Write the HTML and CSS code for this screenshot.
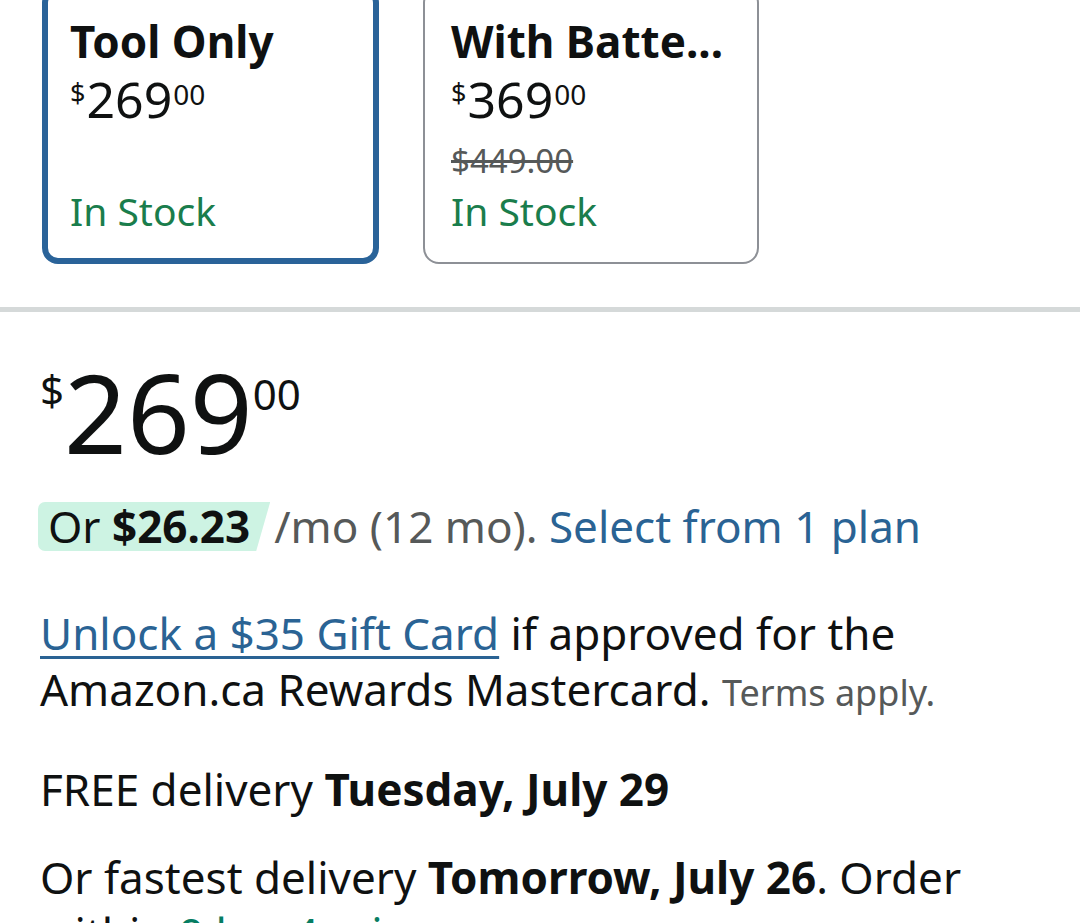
FILE: index.html
```html
<!DOCTYPE html>
<html lang="en">
<head>
<meta charset="utf-8">
<title>Product buy box</title>
<link rel="stylesheet" href="styles.css">
</head>
<body>
<div class="swatches">
  <div class="swatch selected">
    <div class="sw-title">Tool Only</div>
    <div class="sw-price"><span class="sw-sym">$</span><span class="sw-whole">269</span><span class="sw-frac">00</span></div>
    <div class="sw-stock">In Stock</div>
  </div>
  <div class="swatch">
    <div class="sw-title">With Batte...</div>
    <div class="sw-price"><span class="sw-sym">$</span><span class="sw-whole">369</span><span class="sw-frac">00</span></div>
    <div class="sw-list">$449.00</div>
    <div class="sw-stock">In Stock</div>
  </div>
</div>
<div class="divider"></div>
<div class="buybox">
  <div class="price"><span class="p-sym">$</span><span class="p-whole">269</span><span class="p-frac">00</span></div>
  <div class="emi"><span class="pill">Or <b>$26.23</b></span><span class="muted">/mo (12 mo).</span> <a class="link" href="#">Select from 1 plan</a></div>
  <p class="promo"><a class="link underline" href="#">Unlock a $35 Gift Card</a> if approved for the Amazon.ca Rewards Mastercard. <span class="terms">Terms apply.</span></p>
  <p class="delivery free">FREE delivery <b>Tuesday, July 29</b></p>
  <p class="delivery fast">Or fastest delivery <b>Tomorrow, July 26</b>. Order within <span class="countdown">9 hrs 4 mins</span></p>
</div>
</body>
</html>
```

FILE: styles.css
```css
html, body {
  margin: 0;
  padding: 0;
  background: #ffffff;
}
body {
  font-family: "Noto Sans", "Open Sans", sans-serif;
  color: #0f1111;
  width: 1080px;
  height: 923px;
  overflow: hidden;
}
.swatches {
  display: flex;
  gap: 44px;
  padding-left: 42px;
  margin-top: -13px;
}
.swatch {
  box-sizing: border-box;
  width: 336px;
  display: flex;
  flex-direction: column;
  border: 2px solid #8d9096;
  border-radius: 16px;
  padding: 26px 26px 27px 26px;
}
.swatch.selected {
  width: 337px;
  border: 6px solid #2a6399;
  padding: 22px 22px 23px 22px;
}
.sw-title {
  font-weight: 700;
  font-size: 44px;
  line-height: 52px;
  white-space: nowrap;
}
.sw-price {
  display: flex;
  align-items: flex-start;
  line-height: 1;
  margin-top: 7px;
}
.sw-sym {
  font-size: 27px;
  margin-top: 5px;
  margin-right: 1px;
}
.sw-whole {
  font-size: 50px;
}
.sw-frac {
  font-size: 28px;
  margin-top: 6px;
  margin-left: 1px;
}
.sw-list {
  font-size: 33px;
  line-height: 40px;
  color: #565959;
  text-decoration: line-through;
  margin-top: 17px;
}
.sw-stock {
  margin-top: auto;
  padding-top: 6px;
  font-size: 39px;
  line-height: 48px;
  color: #1a7d4c;
}
.divider {
  height: 5px;
  background: #d5d9d9;
  margin-top: 43px;
}
.buybox {
  padding: 0 40px;
  font-size: 44px;
  line-height: 56px;
}
.price {
  display: flex;
  align-items: flex-start;
  line-height: 1;
  margin-top: 44px;
  height: 110px;
}
.p-sym {
  font-size: 42px;
  margin-top: 13px;
}
.p-whole {
  font-size: 110px;
}
.p-frac {
  font-size: 42px;
  margin-top: 17px;
}
.emi {
  margin-top: 32px;
  white-space: nowrap;
}
.pill {
  display: inline-block;
  line-height: 49px;
  padding: 0 20px 0 10px;
  margin-left: -2px;
  background: #cdf3e3;
  border-radius: 7px 0 0 7px;
  clip-path: polygon(0 0, 100% 0, calc(100% - 14px) 100%, 0 100%);
}
.pill b {
  font-weight: 700;
}
.muted {
  color: #565959;
  margin-left: 4px;
}
.link {
  color: #2a6394;
  text-decoration: none;
}
.link.underline {
  text-decoration: underline;
  text-decoration-thickness: 3px;
  text-underline-offset: 6px;
}
.promo {
  margin: 51px 0 0 0;
}
.terms {
  font-size: 36px;
  color: #565959;
}
.delivery {
  margin: 0;
}
.delivery b {
  font-weight: 700;
}
.free {
  margin-top: 40px;
}
.fast {
  margin-top: 32px;
}
.countdown {
  color: #067d62;
}
```
